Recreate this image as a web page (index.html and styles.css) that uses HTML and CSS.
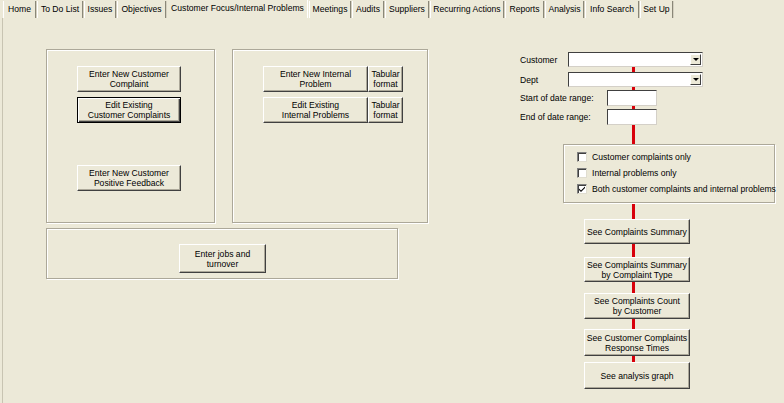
FILE: index.html
```html
<!DOCTYPE html>
<html>
	<head>
		<meta charset="utf-8">
		<title>Customer Focus/Internal Problems</title>
		<link rel="stylesheet" href="styles.css">
	</head>
	<body>

		<!-- tabs -->
		<div class="tabStrip">
			<div class="tab">Home</div>
			<div class="tab">To Do List</div>
			<div class="tab">Issues</div>
			<div class="tab">Objectives</div>
			<div class="tab current">Customer Focus/Internal Problems</div>
			<div class="tab">Meetings</div>
			<div class="tab">Audits</div>
			<div class="tab">Suppliers</div>
			<div class="tab">Recurring Actions</div>
			<div class="tab">Reports</div>
			<div class="tab">Analysis</div>
			<div class="tab">Info Search</div>
			<div class="tab">Set Up</div>
		</div>

		<div class="pane">
			<!-- left -->
			<div class="leftSide">
				<div class="frameRow">
					<div class="frame custFrame">
						<button class="btn wideBtn">Enter New Customer<br>Complaint</button>
						<button class="btn wideBtn default">Edit Existing<br>Customer Complaints</button>
						<button class="btn wideBtn feedback">Enter New Customer<br>Positive Feedback</button>
					</div>
					<div class="frame internFrame">
						<div class="btnPair">
							<button class="btn internBtn">Enter New Internal<br>Problem</button>
							<button class="btn tabBtn">Tabular<br>format</button>
						</div>
						<div class="btnPair">
							<button class="btn internBtn">Edit Existing<br>Internal Problems</button>
							<button class="btn tabBtn">Tabular<br>format</button>
						</div>
					</div>
				</div>
				<div class="frame jobsFrame">
					<button class="btn jobsBtn">Enter jobs and<br>turnover</button>
				</div>
			</div>

			<!-- right -->
			<div class="rightSide">
				<div class="redLine"></div>

				<div class="fieldRow">
					<span class="label shortLabel">Customer</span>
					<div class="combo"><span class="arrow"></span></div>
				</div>
				<div class="fieldRow dept">
					<span class="label shortLabel">Dept</span>
					<div class="combo"><span class="arrow"></span></div>
				</div>
				<div class="fieldRow dateRow">
					<span class="label longLabel">Start of date range:</span>
					<div class="textBox"></div>
				</div>
				<div class="fieldRow dateRow">
					<span class="label longLabel">End of date range:</span>
					<div class="textBox"></div>
				</div>

				<div class="checkFrame">
					<div class="checkRow"><span class="check"></span>Customer complaints only</div>
					<div class="checkRow"><span class="check"></span>Internal problems only</div>
					<div class="checkRow both"><span class="check on">
						<svg width="8" height="8" viewBox="0 0 8 8"><path d="M1 3.5 L3 5.5 L7 1.5 L7 3 L3 7 L1 5 Z" fill="#000"/></svg>
					</span>Both customer complaints and internal problems</div>
				</div>

				<div class="reportBtns">
					<button class="btn repBtn r1">See Complaints Summary</button>
					<button class="btn repBtn r2">See Complaints Summary<br>by Complaint Type</button>
					<button class="btn repBtn r3">See Complaints Count<br>by Customer</button>
					<button class="btn repBtn r4">See Customer Complaints<br>Response Times</button>
					<button class="btn repBtn r5">See analysis graph</button>
				</div>
			</div>
		</div>

	</body>
</html>
```

FILE: styles.css
```css
* {
	margin: 0;
	padding: 0;
	box-sizing: border-box;
}

body {
	width: 784px;
	height: 403px;
	overflow: hidden;
	background: #ece9d8;
	font-family: "Liberation Sans", Arial, sans-serif;
	font-size: 8.6px;
	color: #000;
}

/* tabs */
.tabStrip {
	display: flex;
	height: 18px;
	padding: 1px 0 0 3px;
}

.tabStrip .tab {
	height: 17px;
	line-height: 15px;
	padding-top: 1px;
	text-align: center;
	border-left: 1px solid #fff;
	border-right: 1px solid #8a8778;
	box-shadow: 1px 0 0 #d4d0c0;
	margin-right: 1px;
	white-space: nowrap;
}

.tabStrip .tab:nth-child(1) { width: 33px; }
.tabStrip .tab:nth-child(2) { width: 46px; }
.tabStrip .tab:nth-child(3) { width: 32px; }
.tabStrip .tab:nth-child(4) { width: 49px; }
.tabStrip .tab:nth-child(5) { width: 141px; }
.tabStrip .tab:nth-child(6) { width: 42px; }
.tabStrip .tab:nth-child(7) { width: 32px; }
.tabStrip .tab:nth-child(8) { width: 44px; }
.tabStrip .tab:nth-child(9) { width: 74px; }
.tabStrip .tab:nth-child(10) { width: 39px; }
.tabStrip .tab:nth-child(11) { width: 39px; }
.tabStrip .tab:nth-child(12) { width: 54px; }
.tabStrip .tab:nth-child(13) { width: 33px; }

.tabStrip .tab.current {
	height: 18px;
	margin-top: -1px;
	padding-top: 1px;
	border-left-color: transparent;
	border-right-color: #ffffff;
	box-shadow: none;
}

/* pane */
.pane {
	display: flex;
	height: 385px;
	padding: 31px 0 0 43px;
	border-left: 1px solid #c8c4b2;
	margin-left: 2px;
}

.leftSide {
	width: 382px;
}

.frameRow {
	display: flex;
	gap: 17px;
}

.frame {
	border: 1px solid #aca899;
	box-shadow: inset 1px 1px 0 #fff, 1px 1px 0 #fff;
}

.custFrame {
	width: 169px;
	height: 174px;
	padding: 16px 0 0 30px;
	display: flex;
	flex-direction: column;
	gap: 5px;
}

.internFrame {
	width: 196px;
	height: 174px;
	padding: 16px 0 0 30px;
	display: flex;
	flex-direction: column;
	gap: 5px;
}

.jobsFrame {
	width: 352px;
	height: 51px;
	margin-top: 5px;
	padding: 15px 0 0 132px;
}

/* buttons */
.btn {
	display: block;
	font: inherit;
	color: #000;
	background: #ece9d8;
	border: 1px solid;
	border-color: #ffffff #404040 #404040 #ffffff;
	box-shadow: inset -1px -1px 0 #aca899;
	line-height: 10px;
	text-align: center;
	cursor: pointer;
}

.wideBtn {
	width: 104px;
	height: 26px;
}

.wideBtn.default {
	border: 1px solid #000;
	box-shadow: inset 1px 1px 0 #fff, inset -1px -1px 0 #404040, inset -2px -2px 0 #aca899;
}

.wideBtn.feedback {
	margin-top: 37px;
}

.btnPair {
	display: flex;
}

.internBtn {
	width: 105px;
	height: 26px;
}

.tabBtn {
	width: 35px;
	height: 26px;
}

.jobsBtn {
	width: 87px;
	height: 29px;
}

/* right side */
.rightSide {
	position: relative;
	margin-left: 92px;
	width: 260px;
}

.rightSide .redLine {
	position: absolute;
	left: 112px;
	top: 18px;
	width: 3px;
	height: 320px;
	background: #d8000b;
}

.fieldRow {
	position: relative;
	display: flex;
	align-items: center;
	height: 15px;
	margin-top: 3px;
}

.fieldRow.dept {
	margin-top: 5px;
}

.fieldRow.dateRow {
	height: 16px;
	margin-top: 3px;
}

.label {
	white-space: nowrap;
}

.shortLabel {
	width: 48px;
}

.longLabel {
	width: 87px;
}

.combo {
	position: relative;
	width: 135px;
	height: 15px;
	background: #fff;
	border: 1px solid;
	border-color: #404040 #d4d0c8 #d4d0c8 #404040;
}

.combo .arrow {
	position: absolute;
	right: 1px;
	top: 1px;
	width: 11px;
	height: 11px;
	background: #ece9d8;
	border: 1px solid;
	border-color: #fff #404040 #404040 #fff;
}

.combo .arrow::after {
	content: "";
	position: absolute;
	left: 2px;
	top: 3px;
	border-left: 3px solid transparent;
	border-right: 3px solid transparent;
	border-top: 3px solid #000;
}

.textBox {
	width: 50px;
	height: 16px;
	background: #fff;
	border: 1px solid;
	border-color: #404040 #d4d0c8 #d4d0c8 #404040;
}

.checkFrame {
	position: relative;
	width: 212px;
	height: 59px;
	margin: 19px 0 0 43px;
	padding: 4px 0 0 13px;
	background: #ece9d8;
	border: 1px solid #aca899;
	box-shadow: inset 1px 1px 0 #fff, 1px 1px 0 #fff;
}

.checkRow {
	display: flex;
	align-items: center;
	height: 16px;
	white-space: nowrap;
}

.check {
	display: flex;
	align-items: center;
	justify-content: center;
	width: 10px;
	height: 10px;
	margin-right: 5px;
	background: #fff;
	border: 1px solid;
	border-color: #808080 #e0ddd0 #e0ddd0 #808080;
	box-shadow: inset 1px 1px 0 #404040;
}

.reportBtns {
	position: relative;
	display: flex;
	flex-direction: column;
	margin: 16px 0 0 64px;
}

.repBtn {
	width: 106px;
	height: 25px;
}

.repBtn.r2 { margin-top: 13px; }
.repBtn.r3 { margin-top: 11px; height: 26px; }
.repBtn.r4 { margin-top: 10px; height: 27px; }
.repBtn.r5 { margin-top: 6px; height: 27px; }
```
